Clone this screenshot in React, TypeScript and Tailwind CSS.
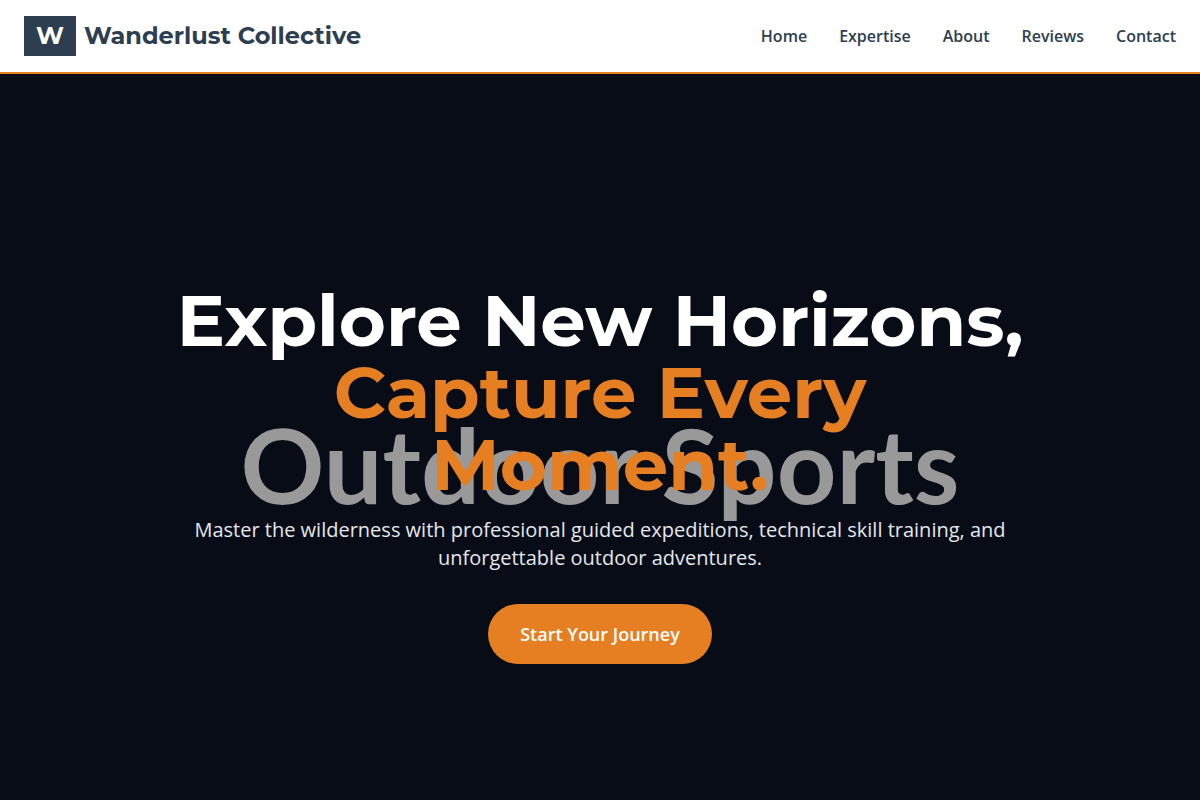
const navLinks = ["Home", "Expertise", "About", "Reviews", "Contact"];

function Header() {
  return (
    <header className="sticky top-0 z-50 border-b-2 border-[#e67e22] bg-white">
      <div className="flex items-center justify-between px-6 py-4">
        <a
          href="#home"
          className="flex items-center gap-2 font-['Montserrat','Inter',sans-serif] text-2xl font-bold text-[#2c3e50]">
          <span className="bg-[#2c3e50] px-3 py-1 text-white">W</span>
          <span>Wanderlust Collective</span>
        </a>
        <nav className="flex gap-8">
          {navLinks.map((label) => (
            <a
              key={label}
              href={`#${label.toLowerCase()}`}
              className="font-semibold text-[#2c3e50] hover:text-[#e67e22]">
              {label}
            </a>
          ))}
        </nav>
      </div>
    </header>
  );
}

function Hero() {
  return (
    <section
      id="home"
      className="relative flex h-screen items-center justify-center overflow-hidden bg-[#070c17]">
      {/* Backdrop caption, sits behind the headline */}
      <div
        aria-hidden="true"
        className="absolute inset-0 flex items-center justify-center pb-5 font-['Lato',sans-serif] text-[104px] leading-none font-bold whitespace-nowrap text-[#999999]">
        Outdoor Sports
      </div>
      <div className="relative max-w-4xl px-6 text-center">
        <h1 className="mb-4 font-['Montserrat','Inter',sans-serif] text-7xl leading-none font-bold text-white">
          Explore New Horizons,{" "}
          <span className="block text-[#e67e22]">Capture Every Moment.</span>
        </h1>
        <p className="mb-8 text-xl text-gray-200">
          Master the wilderness with professional guided expeditions, technical
          skill training, and unforgettable outdoor adventures.
        </p>
        <a
          href="#contact"
          className="inline-block rounded-full bg-[#e67e22] px-8 py-4 text-lg font-semibold text-white hover:bg-[#d35400]">
          Start Your Journey
        </a>
      </div>
    </section>
  );
}

export default function App() {
  return (
    <div className="font-['Open_Sans',sans-serif]">
      <Header />
      <Hero />
    </div>
  );
}
